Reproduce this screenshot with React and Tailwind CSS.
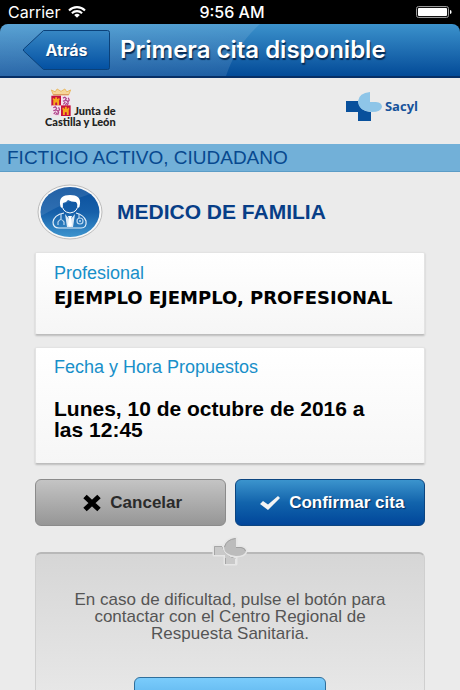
import { useState } from 'react';

function StatusBar() {
  return (
    <div className="grid h-6 shrink-0 grid-cols-3 items-center bg-black px-2 font-['Inter',sans-serif] text-base leading-6 text-white">
      <div className="flex items-center gap-2">
        <span>Carrier</span>
        <svg className="h-3 w-[18px]" viewBox="0 0 18 12" fill="none" stroke="#fff" strokeWidth="2.1">
          <path d="M1 4.4a11.5 11.5 0 0 1 16 0" />
          <path d="M3.9 7.2a7.4 7.4 0 0 1 10.2 0" />
          <path d="M6.2 9a4.2 4.2 0 0 1 5.6 0L9 11.8z" fill="#fff" stroke="none" />
        </svg>
      </div>
      <span className="pl-1 text-center font-medium whitespace-nowrap">9:56 AM</span>
      <svg className="h-3 w-9 justify-self-end" viewBox="0 0 36 12">
        <rect x="0.5" y="0.5" width="32" height="11" rx="2" fill="#111" stroke="#999" />
        <rect x="2" y="2" width="29" height="8" rx="1" fill="#fff" />
        <path d="M34 4q1.6 0 1.6 2T34 8z" fill="#fff" />
      </svg>
    </div>
  );
}

function Header() {
  return (
    <div className="shrink-0 bg-black">
      <header className="relative flex h-[54px] items-center gap-[10px] overflow-hidden rounded-t-lg border-b-2 border-[#062f66] bg-linear-to-b from-[#3b92cc] to-[#034b98] pl-[23px]">
        {/* brillo diagonal */}
        <svg className="absolute inset-0 h-full w-full" viewBox="0 0 460 54" preserveAspectRatio="none">
          <defs>
            <linearGradient id="gloss" x1="0" y1="0" x2="1" y2="0">
              <stop offset="0" stopColor="#fff" stopOpacity="0.16" />
              <stop offset="1" stopColor="#fff" stopOpacity="0.1" />
            </linearGradient>
          </defs>
          <path d="M0 0H260Q236 22 226 54H0z" fill="url(#gloss)" />
        </svg>
        <button type="button" className="relative h-10 w-[87px] shrink-0 font-['Inter',sans-serif] text-base font-bold text-white text-shadow-[1px_1px_1px_#0a3a72]">
          <svg className="absolute inset-0 h-full w-full" viewBox="0 0 87 40">
            <defs>
              <linearGradient id="back" x1="0" y1="0" x2="0" y2="1">
                <stop offset="0" stopColor="#3787c4" />
                <stop offset="1" stopColor="#0350a2" />
              </linearGradient>
            </defs>
            <path d="M20.5.5H84.500Q86.500.5 86.500 2.500V37.500Q86.500 39.500 84.500 39.500H20.500L.7 21Q0 20 .7 19z" fill="url(#back)" stroke="#0b4179" />
          </svg>
          <span className="relative">Atrás</span>
        </button>
        <h1 className="relative font-['Inter',sans-serif] text-2xl font-semibold whitespace-nowrap text-white text-shadow-[1px_2px_1px_#072a52]">
          Primera cita disponible
        </h1>
      </header>
    </div>
  );
}

function Castle({ x, y }) {
  return (
    <g transform={`translate(${x} ${y})`}>
      <rect width="10" height="11" fill="#c8103c" />
      <path d="M2 10V4.500H1.500V2.500H3V3.500H4V1.500H6V3.500H7V2.500H8.500V4.500H8V10H6V7.500Q5 6 4 7.500V10z" fill="#f5a81c" />
    </g>
  );
}

function Lion({ x, y }) {
  return (
    <g transform={`translate(${x} ${y})`}>
      <rect width="10" height="11" fill="#f3e4ee" />
      <path
        d="M2 2.500l2-1 1.500 1.500-1 1.500 2 1 1 2-1 2.500M4.500 5l-2.500.5M4.500 6.500l-2 2.500M7 6.500l1.500-2L7.500 2M6 7.500l-1.500 2.500"
        fill="none"
        stroke="#b0448c"
        strokeWidth="1.3"
      />
    </g>
  );
}

function JuntaLogo() {
  return (
    <div className="relative pt-[17px]">
      {/* el escudo se apoya sobre la esquina del rótulo */}
      <svg className="absolute top-0 left-[5px] h-[28px] w-[22px]" viewBox="0 0 22 29">
        <path d="M3 7L1 2l4 2 2-3 4 2.500L15 1l2 3 4-2-2 5z" fill="#f6d69a" stroke="#e8b04c" strokeWidth="0.8" />
        <path d="M3 7h16" stroke="#d8925c" strokeWidth="1.200" />
        <Castle x={1} y={8} />
        <Lion x={11} y={8} />
        <Lion x={1} y={18} />
        <Castle x={11} y={18} />
      </svg>
      <p className="text-right font-['Lato',sans-serif] text-[11px] leading-[11px] font-black whitespace-nowrap text-[#222]">
        Junta de
        <br />
        Castilla y León
      </p>
    </div>
  );
}

function SacylLogo() {
  return (
    <div className="flex items-center gap-[2px]">
      <svg className="h-[31px] w-[37px]" viewBox="0 0 37 31">
        <path d="M0 10H12Q13 20 25 21V30H12V21H0z" fill="#08509c" />
        <path d="M24 1V11H30Q36 11.500 36 16Q35 21 26 21Q12 20 12 10Q13 2 24 1z" fill="#8ec5e8" />
      </svg>
      <span className="font-['Open_Sans',sans-serif] text-[13px] font-bold text-[#17539b]">Sacyl</span>
    </div>
  );
}

function DoctorIcon() {
  return (
    <svg className="h-14 w-[66px]" viewBox="0 0 66 56">
      <defs>
        <linearGradient id="disc" x1="0" y1="0" x2="0" y2="1">
          <stop offset="0" stopColor="#0a4f9c" />
          <stop offset="0.5" stopColor="#165fa9" />
          <stop offset="1" stopColor="#3c94ce" />
        </linearGradient>
      </defs>
      <ellipse cx="33" cy="28" rx="32" ry="27" fill="#f8f8f8" stroke="#bcbcbc" />
      <ellipse cx="33" cy="28" rx="29.500" ry="25" fill="url(#disc)" />
      <path d="M7 17Q16 3 33 3Q45 3 53 10Q28 18 4 32Q3 24 7 17z" fill="#fff" opacity="0.1" />
      <path d="M23 20Q22 11 33 11Q44 11 43 20Q43 23 41 24Q41 20 39 18Q34 18 31 16Q29 19 26 19L25 24Q23 23 23 20z" fill="#fff" />
      <path d="M25 20Q25 28 33 29Q41 28 41 20" fill="none" stroke="#fff" strokeWidth="1" />
      <path d="M27 29Q17 31 16 38Q16 44 22 44H44Q50 44 49 37Q47 31 39 29" fill="none" stroke="#e6f0fa" strokeWidth="1.200" />
      <path d="M28 30L33 36L38 30L36 43H30z" fill="#dce9f5" />
      <path d="M31 32h4l-1 3 1 6-2 2-2-2 1-6z" fill="#fff" />
      <path d="M24 30V36M21 41V38Q24 33 27 38V41" fill="none" stroke="#bcd8f0" strokeWidth="1.200" />
      <path d="M42 30V34" stroke="#bcd8f0" strokeWidth="1.200" />
      <circle cx="43" cy="37" r="3" fill="none" stroke="#bcd8f0" strokeWidth="1.200" />
      <circle cx="43" cy="37" r="1" fill="#bcd8f0" />
    </svg>
  );
}

const cardClass =
  'rounded-xs border border-[#e3e3e3] border-b-[#bdbdbd] bg-linear-to-b from-white to-[#f6f6f6] px-[18px] shadow-[0_1px_2px_rgba(0,0,0,0.2)]';

export default function App() {
  const [confirmed, setConfirmed] = useState(false);

  return (
    <div className="flex h-screen flex-col overflow-hidden bg-[#ebebeb] font-['Liberation_Sans',Arial,sans-serif]">
      <StatusBar />
      <Header />

      <div className="flex h-[66px] shrink-0 items-start justify-between pt-[10px] pr-[42px] pl-[45px]">
        <JuntaLogo />
        <div className="pt-[3px]">
          <SacylLogo />
        </div>
      </div>

      <p className="h-7 shrink-0 border-b border-[#5b9cc6] bg-[#72b0d8] px-[7px] text-[19px] leading-7 text-[#07498f]">
        FICTICIO ACTIVO, CIUDADANO
      </p>

      <main className="flex shrink-0 flex-col px-[35px] pt-3">
        <div className="flex items-center gap-[14px] pl-[2px]">
          <DoctorIcon />
          <h2 className="text-[21px] font-bold whitespace-nowrap text-[#073e87]">MEDICO DE FAMILIA</h2>
        </div>

        <section className={`mt-3 h-[83px] pt-[9px] ${cardClass}`}>
          <h3 className="text-lg leading-[22px] text-[#188fc9]">Profesional</h3>
          <p className="pt-[2px] font-['DejaVu_Sans',Verdana,sans-serif] text-lg leading-6 font-bold whitespace-nowrap text-black">
            EJEMPLO EJEMPLO, PROFESIONAL
          </p>
        </section>

        <section className={`mt-3 h-[117px] pt-2 ${cardClass}`}>
          <h3 className="text-lg leading-[22px] text-[#188fc9]">Fecha y Hora Propuestos</h3>
          <p className="pt-5 pr-5 text-[21px] leading-[21px] font-bold text-black">
            Lunes, 10 de octubre de 2016 a las 12:45
          </p>
        </section>

        <div className="mt-[15px] grid grid-cols-2 gap-[9px]">
          <button
            type="button"
            onClick={() => setConfirmed(false)}
            className="flex h-[47px] items-center justify-center gap-2 rounded-md border border-[#8b8b8b] bg-linear-to-b from-[#c4c4c4] to-[#969696] pl-1 text-[17px] font-bold text-[#2b2b2b]"
          >
            <svg className="h-[18px] w-5" viewBox="0 0 20 18">
              <path d="M3 2.500L17 15.500M17 2.500L3 15.500" stroke="#000" strokeWidth="5" />
            </svg>
            Cancelar
          </button>
          <button
            type="button"
            aria-pressed={confirmed}
            onClick={() => setConfirmed(true)}
            className="flex h-[47px] items-center justify-center gap-2 rounded-md border border-[#0c4580] bg-linear-to-b from-[#3b94cd] via-[#1264ac] to-[#03469a] pl-1 text-[17px] font-bold whitespace-nowrap text-white text-shadow-[1px_1px_1px_#062e60]"
          >
            <svg className="h-4 w-[22px]" viewBox="0 0 22 16">
              <path d="M1 9L4 6L9 9.500L19 1L21 3L9 15z" fill="#f4f4f4" />
            </svg>
            Confirmar cita
          </button>
        </div>

        <section className="relative mt-[26px] flex flex-col items-center rounded-t-md border border-t-2 border-[#cfcfcf] border-t-[#b8b8b8] bg-linear-to-b from-[#d6d6d6] to-[#ebebeb] px-5 pt-[37px]">
          <svg className="absolute -top-5 left-1/2 h-9 w-11 -translate-x-1/2" viewBox="0 0 44 36">
            <g stroke="#e6e6e6" strokeWidth="3" strokeLinejoin="round">
              <path d="M6 12H17Q18 22 28 23V30H17V21H6z" />
              <path d="M28 4V13H33Q38 14 38 17Q37 22 28 22Q16 21 16 13Q18 5 28 4z" />
            </g>
            <path d="M6 12H14Q16 22 27 24V30H17V21H6z" fill="#c9c9c9" />
            <path d="M28 4V13H33Q38 14 38 17Q37 22 28 22Q16 21 16 13Q18 5 28 4z" fill="#bcbcbc" />
            <path d="M6.500 21V12.500H14M17.500 30V24" fill="none" stroke="#a6a6a6" />
            <path d="M16.500 13Q18.500 5.500 27.500 4.500M28 13.500H33Q37 14 37.500 17" fill="none" stroke="#a0a0a0" />
          </svg>
          <p className="text-center text-[17px] leading-[17px] text-[#555]">
            En caso de dificultad, pulse el botón para contactar con el Centro Regional de Respuesta Sanitaria.
          </p>
          <button
            type="button"
            aria-label="Contactar"
            className="mt-[35px] h-[47px] w-[55%] rounded-md border border-[#2f6f9c] bg-linear-to-b from-[#7accfc] to-[#3f9ddb]"
          />
        </section>
      </main>
    </div>
  );
}
